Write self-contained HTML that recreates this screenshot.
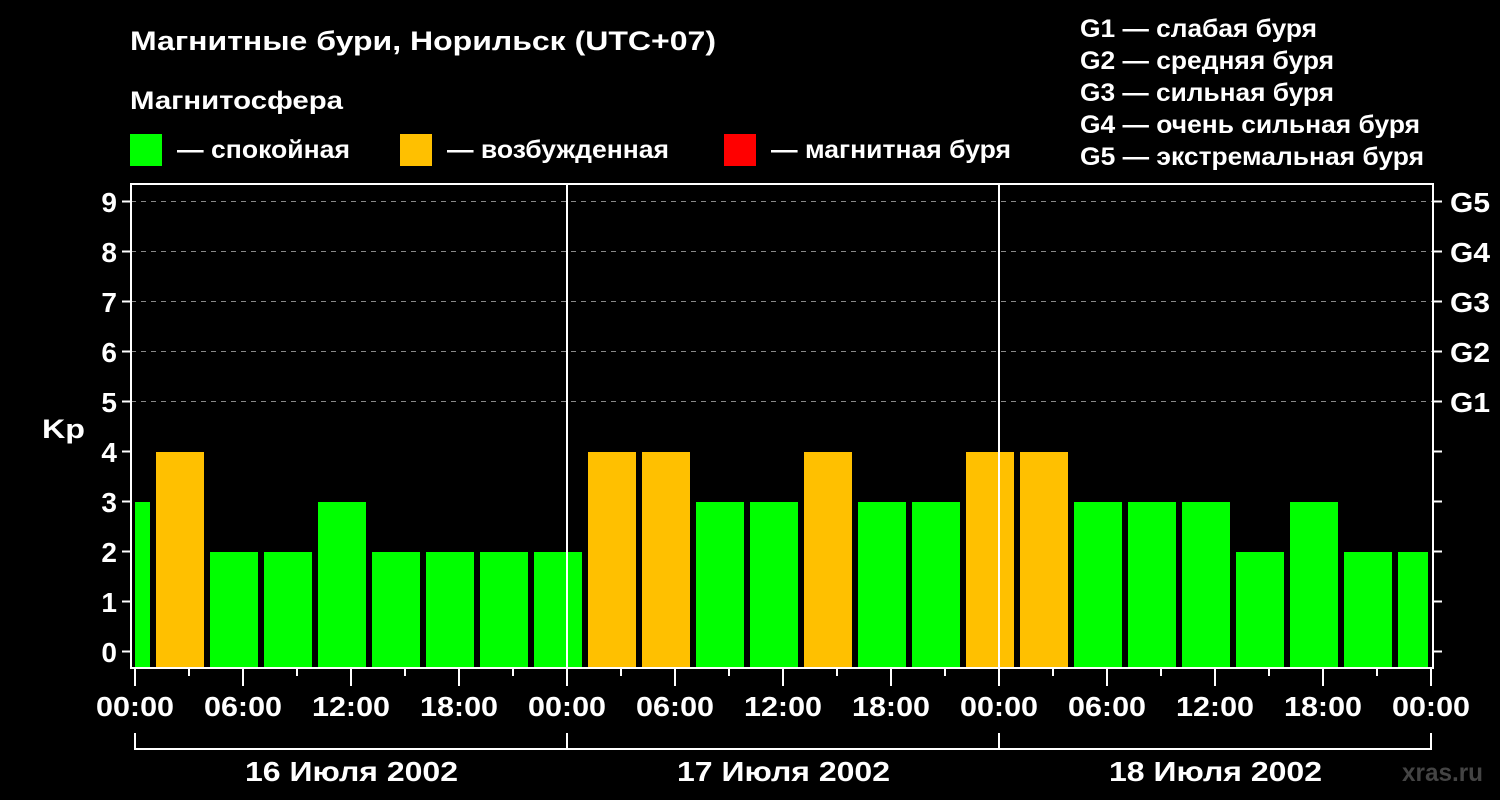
<!DOCTYPE html>
<html><head><meta charset="utf-8"><style>
html,body{margin:0;padding:0;background:#000;}
svg{display:block;}
text{font-family:"Liberation Sans",sans-serif;font-weight:bold;fill:#fff;}
</style></head><body>
<svg width="1500" height="800" viewBox="0 0 1500 800" xmlns="http://www.w3.org/2000/svg">
<rect width="1500" height="800" fill="#000"/>
<text x="130" y="50" font-size="27" textLength="586" lengthAdjust="spacingAndGlyphs">Магнитные бури, Норильск (UTC+07)</text>
<text x="130" y="109" font-size="25" textLength="213" lengthAdjust="spacingAndGlyphs">Магнитосфера</text>
<rect x="130" y="134" width="32" height="32" fill="#00ff00"/>
<text x="177" y="158" font-size="25" textLength="173" lengthAdjust="spacingAndGlyphs">— спокойная</text>
<rect x="400" y="134" width="32" height="32" fill="#ffc000"/>
<text x="447" y="158" font-size="25" textLength="222" lengthAdjust="spacingAndGlyphs">— возбужденная</text>
<rect x="724" y="134" width="32" height="32" fill="#ff0000"/>
<text x="771" y="158" font-size="25" textLength="240" lengthAdjust="spacingAndGlyphs">— магнитная буря</text>
<g font-size="25" lengthAdjust="spacingAndGlyphs">
<text x="1080" y="37" textLength="237" lengthAdjust="spacingAndGlyphs">G1 — слабая буря</text>
<text x="1080" y="69" textLength="254" lengthAdjust="spacingAndGlyphs">G2 — средняя буря</text>
<text x="1080" y="101" textLength="254" lengthAdjust="spacingAndGlyphs">G3 — сильная буря</text>
<text x="1080" y="133" textLength="340" lengthAdjust="spacingAndGlyphs">G4 — очень сильная буря</text>
<text x="1080" y="165" textLength="344" lengthAdjust="spacingAndGlyphs">G5 — экстремальная буря</text>
</g>
<g stroke="#888" stroke-width="1" stroke-dasharray="5,5">
<line x1="131" y1="201.5" x2="1433" y2="201.5"/>
<line x1="131" y1="251.5" x2="1433" y2="251.5"/>
<line x1="131" y1="301.5" x2="1433" y2="301.5"/>
<line x1="131" y1="351.5" x2="1433" y2="351.5"/>
<line x1="131" y1="401.5" x2="1433" y2="401.5"/>
</g>
<g>
<rect x="135" y="502" width="15" height="166" fill="#00ff00"/>
<rect x="156" y="452" width="48" height="216" fill="#ffc000"/>
<rect x="210" y="552" width="48" height="116" fill="#00ff00"/>
<rect x="264" y="552" width="48" height="116" fill="#00ff00"/>
<rect x="318" y="502" width="48" height="166" fill="#00ff00"/>
<rect x="372" y="552" width="48" height="116" fill="#00ff00"/>
<rect x="426" y="552" width="48" height="116" fill="#00ff00"/>
<rect x="480" y="552" width="48" height="116" fill="#00ff00"/>
<rect x="534" y="552" width="48" height="116" fill="#00ff00"/>
<rect x="588" y="452" width="48" height="216" fill="#ffc000"/>
<rect x="642" y="452" width="48" height="216" fill="#ffc000"/>
<rect x="696" y="502" width="48" height="166" fill="#00ff00"/>
<rect x="750" y="502" width="48" height="166" fill="#00ff00"/>
<rect x="804" y="452" width="48" height="216" fill="#ffc000"/>
<rect x="858" y="502" width="48" height="166" fill="#00ff00"/>
<rect x="912" y="502" width="48" height="166" fill="#00ff00"/>
<rect x="966" y="452" width="48" height="216" fill="#ffc000"/>
<rect x="1020" y="452" width="48" height="216" fill="#ffc000"/>
<rect x="1074" y="502" width="48" height="166" fill="#00ff00"/>
<rect x="1128" y="502" width="48" height="166" fill="#00ff00"/>
<rect x="1182" y="502" width="48" height="166" fill="#00ff00"/>
<rect x="1236" y="552" width="48" height="116" fill="#00ff00"/>
<rect x="1290" y="502" width="48" height="166" fill="#00ff00"/>
<rect x="1344" y="552" width="48" height="116" fill="#00ff00"/>
<rect x="1398" y="552" width="30" height="116" fill="#00ff00"/>
</g>
<g stroke="#fff" stroke-width="2" fill="none">
<rect x="131" y="184" width="1302" height="484"/>
<line x1="567" y1="183" x2="567" y2="668"/>
<line x1="999" y1="183" x2="999" y2="668"/>
<path d="M122 201.5H131M122 251.5H131M122 301.5H131M122 351.5H131M122 401.5H131M122 451.5H131M122 501.5H131M122 551.5H131M122 601.5H131M122 651.5H131"/>
<path d="M1433 201.5H1442M1433 251.5H1442M1433 301.5H1442M1433 351.5H1442M1433 401.5H1442M1433 451.5H1442M1433 501.5H1442M1433 551.5H1442M1433 601.5H1442M1433 651.5H1442"/>
<path d="M135 668v18M243 668v18M351 668v18M459 668v18M567 668v18M675 668v18M783 668v18M891 668v18M999 668v18M1107 668v18M1215 668v18M1323 668v18M1431 668v18"/>
<path d="M189 668v8M297 668v8M405 668v8M513 668v8M621 668v8M729 668v8M837 668v8M945 668v8M1053 668v8M1161 668v8M1269 668v8M1377 668v8"/>
<path d="M135 733V749H1431V733M567 733V749M999 733V749"/>
</g>
<g font-size="28" text-anchor="end">
<text x="117" y="212">9</text><text x="117" y="262">8</text><text x="117" y="312">7</text>
<text x="117" y="362">6</text><text x="117" y="412">5</text><text x="117" y="462">4</text>
<text x="117" y="512">3</text><text x="117" y="562">2</text><text x="117" y="612">1</text>
<text x="117" y="662">0</text>
</g>
<text x="42" y="438" font-size="27" textLength="43" lengthAdjust="spacingAndGlyphs">Kp</text>
<g font-size="28">
<text x="1450" y="212" textLength="40" lengthAdjust="spacingAndGlyphs">G5</text><text x="1450" y="262" textLength="40" lengthAdjust="spacingAndGlyphs">G4</text><text x="1450" y="312" textLength="40" lengthAdjust="spacingAndGlyphs">G3</text>
<text x="1450" y="362" textLength="40" lengthAdjust="spacingAndGlyphs">G2</text><text x="1450" y="412" textLength="40" lengthAdjust="spacingAndGlyphs">G1</text>
</g>
<g font-size="28">
<text x="96" y="716" textLength="78" lengthAdjust="spacingAndGlyphs">00:00</text><text x="204" y="716" textLength="78" lengthAdjust="spacingAndGlyphs">06:00</text><text x="312" y="716" textLength="78" lengthAdjust="spacingAndGlyphs">12:00</text>
<text x="420" y="716" textLength="78" lengthAdjust="spacingAndGlyphs">18:00</text><text x="528" y="716" textLength="78" lengthAdjust="spacingAndGlyphs">00:00</text><text x="636" y="716" textLength="78" lengthAdjust="spacingAndGlyphs">06:00</text>
<text x="744" y="716" textLength="78" lengthAdjust="spacingAndGlyphs">12:00</text><text x="852" y="716" textLength="78" lengthAdjust="spacingAndGlyphs">18:00</text><text x="960" y="716" textLength="78" lengthAdjust="spacingAndGlyphs">00:00</text>
<text x="1068" y="716" textLength="78" lengthAdjust="spacingAndGlyphs">06:00</text><text x="1176" y="716" textLength="78" lengthAdjust="spacingAndGlyphs">12:00</text><text x="1284" y="716" textLength="78" lengthAdjust="spacingAndGlyphs">18:00</text>
<text x="1392" y="716" textLength="78" lengthAdjust="spacingAndGlyphs">00:00</text>
<text x="245" y="781" textLength="213" lengthAdjust="spacingAndGlyphs">16 Июля 2002</text>
<text x="677" y="781" textLength="213" lengthAdjust="spacingAndGlyphs">17 Июля 2002</text>
<text x="1109" y="781" textLength="213" lengthAdjust="spacingAndGlyphs">18 Июля 2002</text>
</g>
<text x="1402" y="781" font-size="25" style="fill:#444" textLength="81" lengthAdjust="spacingAndGlyphs">xras.ru</text>
</svg>
</body></html>
